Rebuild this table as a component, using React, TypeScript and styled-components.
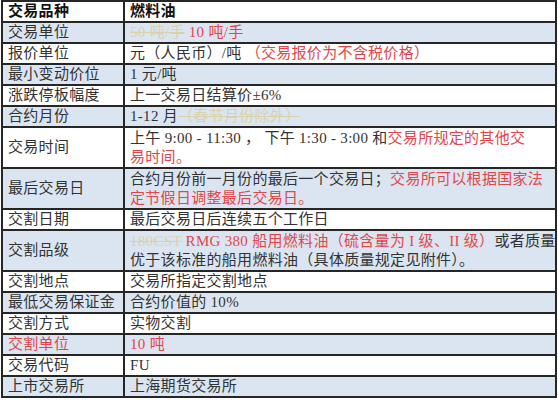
import styled, { createGlobalStyle } from "styled-components";

const GlobalStyle = createGlobalStyle`
  html, body {
    margin: 0;
    padding: 0;
    background: #ffffff;
  }
`;

const Sheet = styled.table`
  width: 556px;
  margin: 0 0 0 1px;
  border-collapse: collapse;
  table-layout: fixed;
  font-family: "Liberation Serif", "Noto Sans CJK SC", serif;
  font-size: 15px;
  letter-spacing: 0.3px;
  color: #333333;
`;

const Row = styled.tr<{ $shade?: boolean }>`
  background: ${(p) => (p.$shade ? "#dbe5f1" : "#ffffff")};
`;

const Label = styled.td<{ $bold?: boolean; $red?: boolean; $tall?: boolean }>`
  width: 122px;
  height: ${(p) => (p.$tall ? "41px" : "19px")};
  box-sizing: border-box;
  padding: 0 0 0 5px;
  border: 2px solid #262626;
  font-weight: ${(p) => (p.$bold ? 700 : 400)};
  color: ${(p) => (p.$red ? "#e2454a" : p.$bold ? "#111111" : "#333333")};
  white-space: nowrap;
  line-height: 19px;
  vertical-align: middle;
  overflow: hidden;
`;

const Value = styled.td<{ $bold?: boolean }>`
  box-sizing: border-box;
  padding: 0 0 0 5px;
  border: 2px solid #262626;
  font-weight: ${(p) => (p.$bold ? 700 : 400)};
  color: ${(p) => (p.$bold ? "#111111" : "#333333")};
  white-space: nowrap;
  line-height: 19px;
  vertical-align: middle;
  overflow: hidden;
`;

const Red = styled.span`
  color: #e2454a;
`;

const Struck = styled.span`
  color: #d8d2ac;
  text-decoration: line-through;
`;

type Item = {
  label: string;
  value: React.ReactNode;
  tall?: boolean;
  red?: boolean;
};

const items: Item[] = [
  {
    label: "交易单位",
    value: (
      <>
        <Struck>50 吨/手</Struck> <Red>10 吨/手</Red>
      </>
    ),
  },
  {
    label: "报价单位",
    value: (
      <>
        元（人民币）/吨 <Red>（交易报价为不含税价格）</Red>
      </>
    ),
  },
  { label: "最小变动价位", value: "1 元/吨" },
  { label: "涨跌停板幅度", value: "上一交易日结算价±6%" },
  {
    label: "合约月份",
    value: (
      <>
        1-12 月<Struck>（春节月份除外）</Struck>
      </>
    ),
  },
  {
    label: "交易时间",
    tall: true,
    value: (
      <>
        上午 9:00 - 11:30 ， 下午 1:30 - 3:00 和<Red>交易所规定的其他交</Red>
        <br />
        <Red>易时间。</Red>
      </>
    ),
  },
  {
    label: "最后交易日",
    tall: true,
    value: (
      <>
        合约月份前一月份的最后一个交易日；<Red>交易所可以根据国家法</Red>
        <br />
        <Red>定节假日调整最后交易日。</Red>
      </>
    ),
  },
  { label: "交割日期", value: "最后交易日后连续五个工作日" },
  {
    label: "交割品级",
    tall: true,
    value: (
      <>
        <Struck>180CST</Struck> <Red>RMG 380 船用燃料油（硫含量为 I 级、II 级）</Red>或者质量
        <br />
        优于该标准的船用燃料油（具体质量规定见附件）。
      </>
    ),
  },
  { label: "交割地点", value: "交易所指定交割地点" },
  { label: "最低交易保证金", value: "合约价值的 10%" },
  { label: "交割方式", value: "实物交割" },
  { label: "交割单位", value: <Red>10 吨</Red>, red: true },
  { label: "交易代码", value: "FU" },
  { label: "上市交易所", value: "上海期货交易所" },
];

export default function App() {
  return (
    <>
      <GlobalStyle />
      <Sheet>
        <tbody>
          <Row>
            <Label $bold>交易品种</Label>
            <Value $bold>燃料油</Value>
          </Row>
          {items.map((item, i) => (
            <Row key={item.label} $shade={i % 2 === 0}>
              <Label $red={item.red} $tall={item.tall}>
                {item.label}
              </Label>
              <Value>{item.value}</Value>
            </Row>
          ))}
        </tbody>
      </Sheet>
    </>
  );
}
